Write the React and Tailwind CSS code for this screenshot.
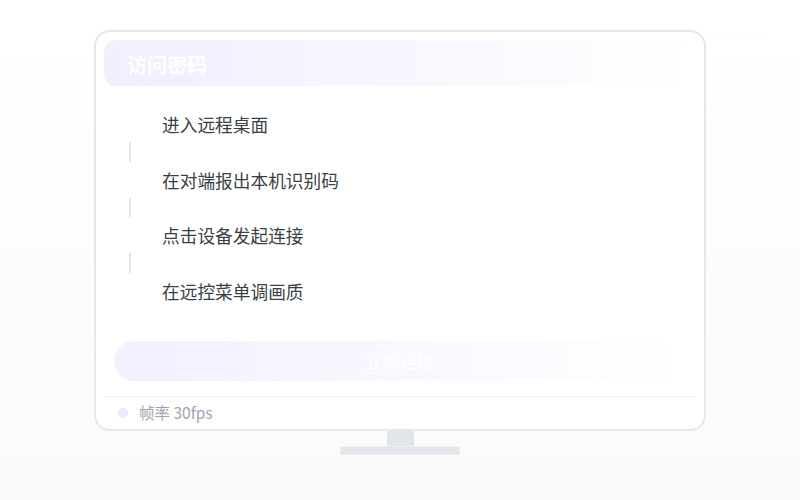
import React from "react";

const steps = ["进入远程桌面", "在对端报出本机识别码", "点击设备发起连接", "在远控菜单调画质"];

export default function App() {
  return (
    <div
      className="w-[800px] h-[500px] flex flex-col items-center pt-[30px] bg-gradient-to-b from-white to-[#fafafa]"
      style={{ fontFamily: '"Noto Sans CJK SC", "Noto Sans", sans-serif' }}
    >
      {/* Screen */}
      <div className="w-[612px] h-[401px] border-2 border-[#e5e7eb] rounded-2xl bg-white flex flex-col px-[8px] pt-[8px]">
        <div className="h-[46px] rounded-xl bg-gradient-to-r from-[#f1eefe] to-transparent flex items-center pl-[23px] pt-[5px]">
          <span className="text-white text-[20px] font-bold leading-none">访问密码</span>
        </div>

        <div className="flex flex-col mt-[26px]">
          {steps.map((s, i) => (
            <div key={i} className="flex flex-col">
              <div className="pl-[58px] text-[17.7px] leading-[24px] text-[#3a3f47]">{s}</div>
              {i < steps.length - 1 && (
                <div className="ml-[25px] w-[2px] h-[19.7px] my-[6px] bg-[#e5e7eb]" />
              )}
            </div>
          ))}
        </div>

        <div className="mx-[10px] mt-[38px] h-[40px] rounded-full bg-gradient-to-r from-[#f3f0ff] to-transparent flex items-center justify-center">
          <span className="text-white text-[17.5px]">立即连接</span>
        </div>

        <div className="mx-[2px] mt-[15px] border-t border-[#eef0f3]" />
        <div className="flex items-center h-[32px] pl-[14px] gap-[11px]">
          <span className="w-[10px] h-[10px] rounded-full bg-[#ede9fe]" />
          <span className="text-[15.5px] text-[#9ca3af]">帧率 30fps</span>
        </div>
      </div>

      {/* Stand */}
      <div className="w-[27px] h-[15px] bg-[#e2e5ea]" />
      <div className="w-[120px] h-[9px] bg-[#e2e5ea] border border-[#eef0f3]" />
    </div>
  );
}
